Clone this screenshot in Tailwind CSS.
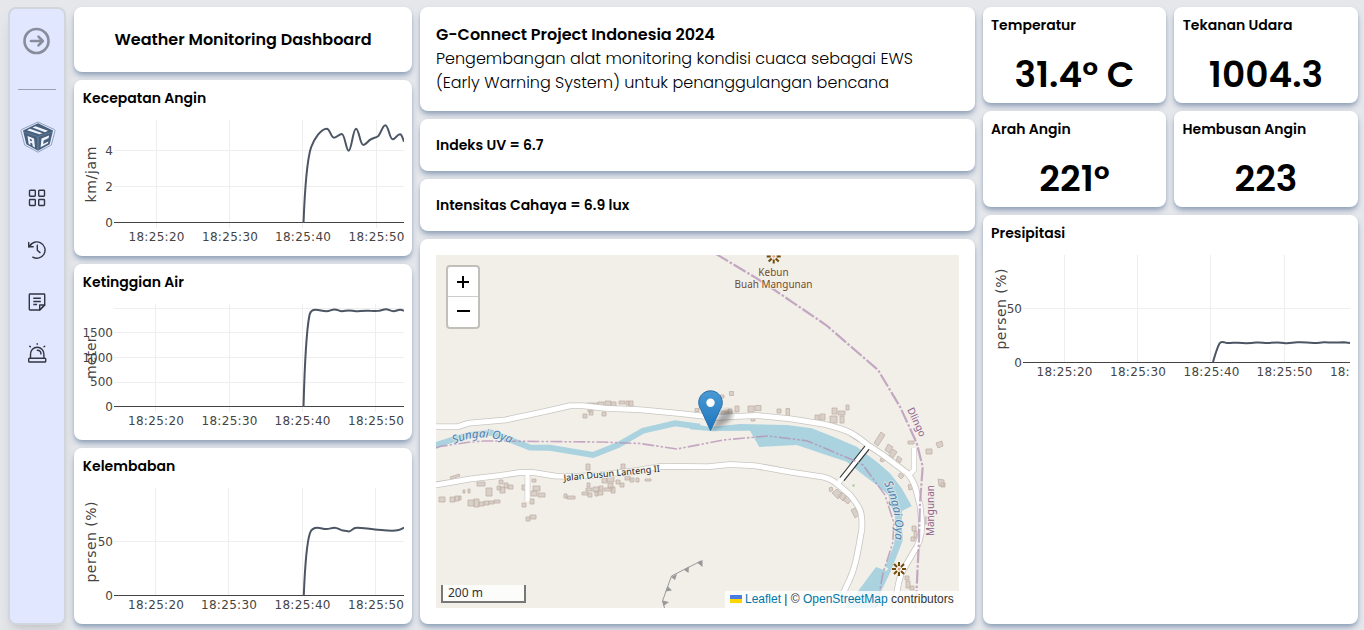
<!DOCTYPE html>
<html lang="id">
<head>
<meta charset="utf-8">
<title>Weather Monitoring Dashboard</title>
<script src="https://cdn.jsdelivr.net/npm/@tailwindcss/browser@4"></script>
</head>
<body class="flex h-[630px] w-[1364px] gap-2 overflow-hidden bg-gray-200 pt-[7px] pl-2 font-['Poppins','Inter',sans-serif] text-sm text-black">

<aside class="flex h-[618px] w-[58px] shrink-0 flex-col items-center rounded-lg border-2 border-gray-300 bg-indigo-100 shadow-lg">
  <svg class="mt-[18px] size-7 shrink-0 text-[#888c9b]" viewBox="0 0 28 28" fill="none" stroke="currentColor" stroke-width="2.6" stroke-linecap="round" stroke-linejoin="round"><circle cx="13.5" cy="14" r="12"/><path d="M8 14h11.5M15.5 9.7l4.3 4.3-4.3 4.3"/></svg>
  <div class="mt-[34px] h-px w-[38px] shrink-0 bg-gray-400"></div>
  <svg class="mt-[31px] ml-0.5 h-8 w-[36px] shrink-0" viewBox="0 0 36 32">
    <path d="M18 1 34.3 8.5Q35.2 9 35 10L31.3 24 18 31.2 4.7 24 1 10Q.8 9 1.7 8.5Z" fill="#e6eaff" stroke="#7d90a8" stroke-width=".8"/>
    <path d="M18 2.3 33 9.6 29.7 23.2 18 29.8 6.3 23.2 3 9.6Z" fill="#46607d"/>
    <path d="M7 9.300 10 7.800 22.500 12.300 19.500 13.300ZM12.500 6.600 15.500 5.200 28 9.800 25 11.200Z" fill="#f1f4ff"/>
    <path d="M4 11.2 17.6 15.5 18 29.3 18.6 15.5 32 11.2" fill="none" stroke="#6f86a0" stroke-width=".6"/>
    <path d="M7.5 15 14 17.400 15 26.500 12.700 25.300 12.300 22.600 10.300 21.400 10.500 24 8.700 22.900ZM9.800 17.800 10 19.400 12 20.500 11.700 18.600Z" fill="#f1f4ff" fill-rule="evenodd"/>
    <path d="M29 14.6 21.5 17.6 20.6 26.3 28 22.3 28.3 20.5 23.200 23.100 23.600 19.600 28.7 17Z" fill="#f1f4ff"/>
  </svg>
  <svg class="mt-9 size-[18px] shrink-0 text-[#333642]" viewBox="0 0 18 18" fill="none" stroke="currentColor" stroke-width="1.4"><rect x="1.5" y="1.2" width="5.8" height="6" rx=".7"/><rect x="10.7" y="1.2" width="5.8" height="6" rx=".7"/><rect x="1.5" y="10.5" width="5.8" height="6" rx=".7"/><rect x="10.7" y="10.5" width="5.8" height="6" rx=".7"/></svg>
  <svg class="mt-[33px] size-5 shrink-0 text-[#333642]" viewBox="0 0 20 20" fill="none" stroke="currentColor" stroke-width="1.4" stroke-linecap="round" stroke-linejoin="round"><path d="M2.5 6.4A8.2 8.2 0 1 1 5.8 17.2"/><path d="M1.7 2.4v4.4h4.5"/><path d="M1.7 6.7 4.5 4" /><path d="M10.3 5.3V10.3L13 12.6"/></svg>
  <svg class="mt-8 size-5 shrink-0 text-[#333642]" viewBox="0 0 20 20" fill="none" stroke="currentColor" stroke-width="1.4" stroke-linejoin="round"><path d="M3 2h14a.7.7 0 0 1 .7.7V13l-5 5H3a.7.7 0 0 1-.7-.7V2.7A.7.7 0 0 1 3 2Z"/><path d="M12.7 18v-5h5Z"/><path d="M6.3 6.3h7.5M6.3 9.5h7.5M6.3 12.5h3.8" stroke-width="1.6"/></svg>
  <svg class="mt-[30px] size-[22px] shrink-0 text-[#333642]" viewBox="0 0 22 22" fill="none" stroke="currentColor" stroke-width="1.4" stroke-linecap="round" stroke-linejoin="round"><path d="M4.5 16.2V12a6.7 6.7 0 0 1 13.4 0v4.2"/><rect x="2.7" y="16.3" width="17" height="3.7" rx=".8"/><path d="M11.3 8.2A3.9 3.9 0 0 1 15 12M11.2 1.6v.6M3.7 4.2l.7.6M18.7 4.2l-.7.6"/></svg>
</aside>

<main class="grid h-[617px] grid-cols-[338px_555px_375px] gap-2">
  <section class="flex flex-col gap-2">
    <div class="flex h-[65px] items-center justify-center rounded-lg bg-white text-base font-semibold shadow-md shadow-slate-400">Weather Monitoring Dashboard</div>

    <div class="h-44 rounded-lg bg-white p-2 shadow-md shadow-slate-400">
      <h2 class="pl-[.8px] font-semibold">Kecepatan Angin</h2>
      <svg class="h-[140px] w-[322px] font-['Verdana','DejaVu_Sans',sans-serif] text-xs" viewBox="82 108 322 140" fill="#444">
        <path d="M156.5 120v108M229.5 120v108M302.5 120v108M376.5 120v108M114 150.5H404M114 186.5H404" stroke="#eee"/>
        <path d="M114 222.5H404" stroke="#444"/>
        <path d="M303.5 223C305 185 307 160 311 147.5C314 139 321 128.7 326.7 128.7C330 128.7 331 137.7 334 137.7C337 137.7 339 134 341.7 134C345 134 346 150.7 348.7 150.7C351.5 150.7 353 128.7 356 128.7C359 128.7 360 145 363.3 145C366 145 368 140.5 371 139.3C374 137.5 376 138 378.3 136C381 133.5 382.5 125.3 385.3 125.3C388.5 125.3 389.5 139.3 392.7 139.3C395.5 139.3 397 134.3 400 134.3C402 134.3 402.5 138 404 141.7" fill="none" stroke="#4b5563" stroke-width="2"/>
        <g text-anchor="end"><text x="113" y="155">4</text><text x="113" y="191">2</text><text x="113" y="227">0</text></g>
        <text x="128.5" y="241" textLength="56">18:25:20</text><text x="202" y="241" textLength="56">18:25:30</text><text x="275" y="241" textLength="56">18:25:40</text><text x="348.5" y="241" textLength="56">18:25:50</text>
        <text transform="translate(96 202.5) rotate(-90)" font-size="14" textLength="56">km/jam</text>
      </svg>
    </div>

    <div class="h-44 rounded-lg bg-white p-2 shadow-md shadow-slate-400">
      <h2 class="pl-[.8px] font-semibold">Ketinggian Air</h2>
      <svg class="h-[140px] w-[322px] font-['Verdana','DejaVu_Sans',sans-serif] text-xs" viewBox="82 292 322 140" fill="#444">
        <path d="M155.5 304v108M229.5 304v108M302.5 304v108M375.5 304v108M114 308.5H404M114 332.5H404M114 357.5H404M114 382.5H404" stroke="#eee"/>
        <path d="M114 406.5H404" stroke="#444"/>
        <path d="M303.5 407C304.5 370 306.5 330 309.5 315C310.5 311 312 309.8 315.5 309.8C320 309.8 322 311.3 326.5 311.3C330 311.3 331 309.5 334.5 309.5C338 309.5 339 311.3 342 311.3C345 311.3 346 310.4 349 310.4C352 310.4 353 311.2 356 311.2C361 311 365 310.3 370 310.8C373 311 376 311 379 310.8C382 310.4 383 309.2 386 309.2C389 309.2 390 311.2 393.5 311.2C396 311.2 397.5 309.7 400 309.7C402 309.7 403 310.3 404 310.8" fill="none" stroke="#4b5563" stroke-width="2"/>
        <g text-anchor="end"><text x="113" y="337">1500</text><text x="113" y="362">1000</text><text x="113" y="386">500</text><text x="113" y="411">0</text></g>
        <text x="128" y="425" textLength="56">18:25:20</text><text x="201.5" y="425" textLength="56">18:25:30</text><text x="274.5" y="425" textLength="56">18:25:40</text><text x="348" y="425" textLength="56">18:25:50</text>
        <text transform="translate(96 379) rotate(-90)" font-size="14" textLength="42.5">meter</text>
      </svg>
    </div>

    <div class="h-44 rounded-lg bg-white p-2 shadow-md shadow-slate-400">
      <h2 class="pl-[.8px] font-semibold">Kelembaban</h2>
      <svg class="h-[140px] w-[322px] font-['Verdana','DejaVu_Sans',sans-serif] text-xs" viewBox="82 476 322 140" fill="#444">
        <path d="M155.5 488v107M228.5 488v107M302.5 488v107M375.5 488v107M114 541.5H404" stroke="#eee"/>
        <path d="M114 595.5H404" stroke="#444"/>
        <path d="M303.8 595C305 565 307 542 310 533C311.5 528.5 314 527.8 317.5 527.8C321 527.8 323 529 326.5 529C330 529 331 527.7 334.5 527.7C338 527.7 340 530.3 343 530.6C346 531.2 347 531.4 349 531.4C352 531.4 352 527.7 357 527.7C364 527.7 368 529 375 529.4C382 530 386 530.8 392 530.8C397 530.8 401 530 404 527.5" fill="none" stroke="#4b5563" stroke-width="2"/>
        <g text-anchor="end"><text x="113" y="546">50</text><text x="113" y="600">0</text></g>
        <text x="128" y="609" textLength="56">18:25:20</text><text x="201" y="609" textLength="56">18:25:30</text><text x="274.5" y="609" textLength="56">18:25:40</text><text x="348" y="609" textLength="56">18:25:50</text>
        <text transform="translate(96 582.5) rotate(-90)" font-size="14" textLength="81">persen (%)</text>
      </svg>
    </div>
  </section>

  <section class="flex flex-col gap-2">
    <div class="flex h-[104px] flex-col justify-center rounded-lg bg-white px-4 text-base font-light shadow-md shadow-slate-400">
      <h1 class="font-semibold">G-Connect Project Indonesia 2024</h1>
      <p class="whitespace-nowrap">Pengembangan alat monitoring kondisi cuaca sebagai EWS<br>(Early Warning System) untuk penanggulangan bencana</p>
    </div>
    <div class="flex h-[52px] items-center rounded-lg bg-white px-4 font-semibold shadow-md shadow-slate-400">Indeks UV = 6.7</div>
    <div class="flex h-[52px] items-center rounded-lg bg-white px-4 font-semibold shadow-md shadow-slate-400">Intensitas Cahaya = 6.9 lux</div>
    <div class="h-[385px] rounded-lg bg-white p-4 shadow-md shadow-slate-400">
      <div class="relative h-[353px] w-[523px] overflow-hidden bg-[#f2efe9]">
        <svg class="h-[353px] w-[523px] font-['Noto_Sans',sans-serif]" viewBox="436 255 523 353" fill="none">
          <defs>
            <path id="oya1" d="M454 444Q482 431 512 444"/>
            <path id="oya2" d="M884 483Q897 508 895 542"/>
            <g id="flower" stroke="#734a08" stroke-width="2"><path d="M-7 0H-3M3 0H7M0-7V-3M0 3V7M-5-5-2-2M2 2 5 5M-5 5-2 2M2-2 5-5"/><circle r=".8" stroke="#e8865a" stroke-width="1"/></g>
          </defs>
          <!-- rivers -->
          <g fill="#aad3df">
            <path d="M430 447 453 439.5 467 435.5 491 432.5 512 440.5 530 447.5 550 447.8 593 455 618 445 643 430.7 675 423.3 700 426.7" stroke="#aad3df" stroke-width="6" fill="none"/>
            <path d="M690 423.3 710 427 740 424 787 425 811.7 428.3 833.3 436.7 856.7 446.7 876.7 461.7 890 473.3 901.7 488.3 911.7 506 902 511 901.7 524 903 540 890 573 880 593.5 876 610 842 610 856.7 593 876 567 886.7 571 894 556.7 899 540 901 527 897 517 891.7 508.3 888.3 495 876.7 485 863.3 475 846.7 461.7 823.3 454 796.7 445 759.3 447 750 430.7 710 431 690 429.3Z"/>
            <path d="M897 505 899 527 897 545 888 568" stroke="#aad3df" stroke-width="6" fill="none"/>
          </g>
          <!-- buildings -->
          <g fill="#d9d0c9" stroke="#c0b1a6" stroke-width=".8">
            <path d="M587 403h6v4h-6ZM593 403h5v4h-5ZM598 402h6v4h-6ZM605 401h6v5h-6ZM611 402h5v4h-5ZM619 401h6v3h-6ZM626 401h3v4h-3ZM629 401h4v5h-4ZM590 410h3v5h-4ZM588 408h3v4h-3ZM602 412h4v4h-4ZM583 414h4v4h-4Z"/>
            <path d="M695 408.500h4v3h-4ZM720 395h4v3h-4ZM729.500 391.500h4v4h-4ZM721 411h11v4h-11ZM728 409h4v4h-4ZM735 406h4v6h-4ZM748 406h6v6h-6ZM755 405.500h6v5h-6ZM777 409h4v4h-4ZM786 408.500h3.500v7h-3.500ZM815 415h4v6h-4ZM820 414h5v6h-5ZM832 408h5v6h-5ZM838 411h7v4h-7ZM846 405h3v5h-3ZM830 416h7v7h-7ZM840 416h4v7h-4ZM751 418h4v3h-4Z"/>
            <path d="m881 432 4 3-7 11-4-3ZM888 444l5 3-4 6-4-3ZM893 449l4 3-4 6-4-3ZM898 456l4 3-2 4-4-3ZM881 458l4 2-2 2-3-1ZM936 443l6-2 1 5-5 2ZM926 449h6v5h-6ZM908 441h6v3h-6ZM938 479l6 1v6h-5ZM941 483h4v4h-4ZM900 473l4 3-3 3-3-3ZM908 485l4-1 1 5-4 1ZM912 526h4v5h-4ZM914 531h3v7h-3ZM911 537h4v4h-4ZM925 517h4v7h-4ZM851 435l9 5-1 2-9-6Z"/>
            <path d="m832 493 5-4 5 5-4 5ZM838 496l4-4 4 4-3 5ZM843 500l4-4 4 4-3 4ZM829 488l3-1 1 3-3 2ZM851 510l4-2 4 7-4 3ZM905 576h4v4h-4ZM906 581h4v7h-4ZM910 586h4v4h-4Z"/>
            <path d="m450 477 9-3 1 2-9 3ZM477 482h8v4h-8ZM486 488h6v8h-6ZM463 490h2v3h-2ZM468 489h2v4h-2ZM439 497h6v5h-6ZM450 497h5v5h-5ZM455 496h4v5h-4ZM459 496h2v4h-2ZM468 500h6v6h-6ZM474 499h5v8h-5ZM479 502h5v4h-5ZM484 501h5v4h-5ZM489 501h5v3h-5ZM494 500h6v3h-6ZM499 480h4v4h-4ZM497 486h4v4h-4ZM500 487h5v6h-5ZM504 483h4v5h-4ZM508 485h5v4h-5Z"/>
            <path d="M522 485h4v5h-4ZM532 479h4v3h-4ZM533 486h7v5h-7ZM531 491h6v5h-6ZM538 493h7v4h-7ZM522 503h4v4h-4ZM530 499h4v5h-4ZM526 517h4v4h-4ZM530 515h6v4h-6ZM564 494h3v4h-3ZM567 496h8v3h-8ZM586 464h4v6h-4ZM621 464h4v5h-4ZM587 483h3v4h-3ZM586 488h6v3h-6ZM582 492h6v3h-6ZM588 493h4v4h-4ZM593 487h6v5h-6ZM595 491h3v5h-3ZM599 486h4v4h-4ZM602 478h5v5h-5ZM607 477h7v5h-7ZM608 483h5v5h-5ZM604 488h8v3h-8ZM611 487h4v6h-4ZM598 491h5v4h-5ZM620 483h4v4h-4ZM625 476h5v4h-5ZM630 478h4v4h-4ZM616 480h4v4h-4ZM636 478h3v4h-3ZM645 479h6v2h-6Z"/>
          </g>
          <circle cx="853.500" cy="485.500" r="1.300" fill="#add19e"/>
          <!-- roads: grey casing, then white surface -->
          <g stroke-linejoin="round">
            <g stroke="#c8c6c2" stroke-width="6.600">
              <path d="M430 426.700H458L468 423.300 505 420 545 411.500 570 405.700 583 405.700 605 408.300 640 409.700 680 413.500 715 417.500 735 416.500 757 415.500 790 418.700 823 424C850 430 855 435 868 445L883 455 907 473C917 484 916 493 920 505L921.700 523C922 535 919 545 913 553L902 572C898 581 896 597 895 612"/>
              <path d="M430 486 470 479 500 475.500 520 472.500 533 472.500 555 476 575 476.500 600 475 640 470 662 466.300 708 466.700 730 464.500 755 465.700 790 472 823 477C832 479 836 483 842 488L850 495C860 507 863 512 861.700 530C858 550 856 568 847 585L835 612"/>
              <path d="M527.500 474V501M914 448V470L908 476M837 485 842 479" stroke-width="5.600"/>
            </g>
            <g stroke="#fff" stroke-width="5">
              <path d="M430 426.700H458L468 423.300 505 420 545 411.500 570 405.700 583 405.700 605 408.300 640 409.700 680 413.500 715 417.500 735 416.500 757 415.500 790 418.700 823 424C850 430 855 435 868 445L883 455 907 473C917 484 916 493 920 505L921.700 523C922 535 919 545 913 553L902 572C898 581 896 597 895 612"/>
              <path d="M430 486 470 479 500 475.500 520 472.500 533 472.500 555 476 575 476.500 600 475 640 470 662 466.300 708 466.700 730 464.500 755 465.700 790 472 823 477C832 479 836 483 842 488L850 495C860 507 863 512 861.700 530C858 550 856 568 847 585L835 612"/>
              <path d="M527.500 473V501M914 448V470L908 476M836 486 868 446" stroke-width="4.500"/>
            </g>
            <path d="M865 446 840 477.500M869 449.300 844 480.700" stroke="#333" stroke-width="1.200"/>
          </g>
          <!-- boundaries -->
          <g stroke="#b48fb4" stroke-opacity=".75">
            <path d="M716 254 754 276.700 774.500 290 826 325 878 370 900 406.700 916.700 443 922.700 466.700 920 503 919 540 917.700 566.700 915.700 608" stroke-width="2.200" stroke-dasharray="14 2 2.500 2"/>
            <path d="M436 448 440 446.500 470 442 485 441 600 442 640 443.500 677 449 723 440 768 436 806.700 440.700 853 460 863 465 885 495 894 523 892.700 543 883 573 876.700 608" stroke-width="1.600" stroke-dasharray="12 2 2.500 2 2.500 2"/>
          </g>
          <!-- cliff -->
          <path d="M701 561 671.500 576 662.500 601 664.500 608" stroke="#999"/>
          <path d="M697 562.500 702.500 560V567ZM683.500 569.500 689 566.500 688.500 573ZM671 577 677 574 675 580ZM667.500 586 665.500 591.500 672 590.500ZM662.500 600.500 663.500 606 669 602Z" fill="#999"/>
          <!-- labels -->
          <g stroke="#f2efe9" stroke-width="2" paint-order="stroke" stroke-linejoin="round">
            <g fill="#4d80b3" font-size="11.500" font-style="italic" stroke-opacity=".6"><text><textPath href="#oya1">Sungai Oya</textPath></text><text><textPath href="#oya2">Sungai Oya</textPath></text></g>
            <text transform="translate(564 481) rotate(-5.500)" fill="#222" font-size="9" textLength="96.500">Jalan Dusun Lanteng II</text>
            <g fill="#734a2a" font-size="10" text-anchor="middle"><text x="773.500" y="275.500" textLength="30.500">Kebun</text><text x="773.500" y="287.500" textLength="78">Buah Mangunan</text></g>
            <g fill="#8d618b" font-size="10"><text transform="translate(907 409.500) rotate(65)" textLength="31">Dlingo</text><text transform="translate(934 536) rotate(-90)" textLength="51">Mangunan</text></g>
          </g>
          <use href="#flower" x="773.700" y="256.500"/>
          <use href="#flower" x="899" y="569"/>
        </svg>

        <!-- marker pin with its shadow -->
        <svg class="absolute top-[135px] left-[262px] h-[42px] w-[44px]" viewBox="0 0 44 42">
          <defs><linearGradient id="pin" x1="0" y1="0" x2="0" y2="1"><stop offset="0" stop-color="#4a9ad4"/><stop offset="1" stop-color="#1d74bf"/></linearGradient><filter id="soft"><feGaussianBlur stdDeviation="2"/></filter></defs>
          <path d="M13 41 20 27Q27 17 33 21C38 25 31 32 25 35Z" fill="#000" opacity=".32" filter="url(#soft)"/>
          <path d="M12.500.8C6 .8.700 6 .700 12.500c0 3 1 5.200 2.300 7.400L12.500 40.500 22 19.900c1.300-2.200 2.300-4.400 2.300-7.400C24.300 6 19 .8 12.500.8Z" fill="url(#pin)" stroke="#2e6fa5"/>
          <circle cx="12.500" cy="12.700" r="4.200" fill="#fff"/>
        </svg>

        <div class="absolute top-2.5 left-2.5 flex h-16 w-[34px] flex-col overflow-hidden rounded-[4px] border-2 border-[#c2bfba] bg-white">
          <div class="flex h-[30px] items-center justify-center border-b border-[#ccc] pt-px"><svg class="size-3.5" viewBox="0 0 14 14" stroke="#000" stroke-width="2"><path d="M1 7h12M7 1v12"/></svg></div>
          <div class="flex flex-1 items-center justify-center pb-0.5"><svg class="size-3.5" viewBox="0 0 14 14" stroke="#000" stroke-width="2"><path d="M1 7h13"/></svg></div>
        </div>

        <div class="absolute bottom-[5px] left-[5px] h-[18px] w-[85px] border-2 border-t-0 border-[#777] bg-white/80 pl-[5px] font-['Noto_Sans',sans-serif] text-xs leading-4 text-[#333]">200 m</div>

        <div class="absolute right-0 bottom-0 flex h-[17px] w-[234px] items-center bg-white/80 pb-0.5 pl-[5px] font-['Liberation_Sans',sans-serif] text-xs whitespace-pre text-[#333]">
          <svg class="mr-[3px] h-2 w-3" viewBox="0 0 12 8"><path fill="#4c7be1" d="M0 0h12v4H0z"/><path fill="#ffd500" d="M0 4h12v4H0z"/></svg><span class="text-[#0078a8]">Leaflet</span> | © <span class="text-[#0078a8]">OpenStreetMap</span> contributors</div>
      </div>
    </div>
  </section>

  <section class="grid grid-cols-[183px_184px] grid-rows-[96px_96px_409px] gap-2">
    <div class="rounded-lg bg-white p-2 shadow-md shadow-slate-400"><h2 class="font-semibold">Temperatur</h2><p class="mt-5 text-center text-4xl font-semibold">31.4° C</p></div>
    <div class="rounded-lg bg-white p-2 shadow-md shadow-slate-400"><h2 class="pl-[.8px] font-semibold">Tekanan Udara</h2><p class="mt-5 text-center text-4xl font-semibold">1004.3</p></div>
    <div class="rounded-lg bg-white p-2 shadow-md shadow-slate-400"><h2 class="font-semibold">Arah Angin</h2><p class="mt-5 text-center text-4xl font-semibold">221°</p></div>
    <div class="rounded-lg bg-white p-2 shadow-md shadow-slate-400"><h2 class="pl-[.5px] font-semibold">Hembusan Angin</h2><p class="mt-5 text-center text-4xl font-semibold">223</p></div>
    <div class="col-span-2 rounded-lg bg-white p-2 shadow-md shadow-slate-400">
      <h2 class="font-semibold">Presipitasi</h2>
      <svg class="h-[140px] w-[359px] font-['Verdana','DejaVu_Sans',sans-serif] text-xs" viewBox="991 243 359 140" fill="#444">
        <path d="M1064.500 255v107M1137.500 255v107M1210.500 255v107M1284.500 255v107M1023 308.500H1350" stroke="#eee"/>
        <path d="M1023 362.500H1350" stroke="#444"/>
        <path d="M1213 362C1215 355 1217 348 1219.500 343.500C1221 341 1223.500 342 1226 342.800C1230 343.500 1234 342.300 1238 342.700C1245 343.400 1250 343.300 1256 342.500C1262 342 1264 343.400 1269 342.900C1275 342.300 1279 342 1284 343C1289 343.700 1292 342.500 1297 342.300C1303 342 1309 342.500 1314 343C1318 343.300 1321 342 1325 342.300C1331 342.900 1338 342.600 1344 342.300L1350 342.900" fill="none" stroke="#4b5563" stroke-width="2"/>
        <g text-anchor="end"><text x="1022" y="313">50</text><text x="1022" y="367">0</text></g>
        <text x="1036.500" y="376" textLength="56">18:25:20</text><text x="1110" y="376" textLength="56">18:25:30</text><text x="1183.500" y="376" textLength="56">18:25:40</text><text x="1256.500" y="376" textLength="56">18:25:50</text><text x="1330" y="376" textLength="19.500">18:</text>
        <text transform="translate(1006 349.500) rotate(-90)" font-size="14" textLength="81">persen (%)</text>
      </svg>
    </div>
  </section>
</main>
</body>
</html>
